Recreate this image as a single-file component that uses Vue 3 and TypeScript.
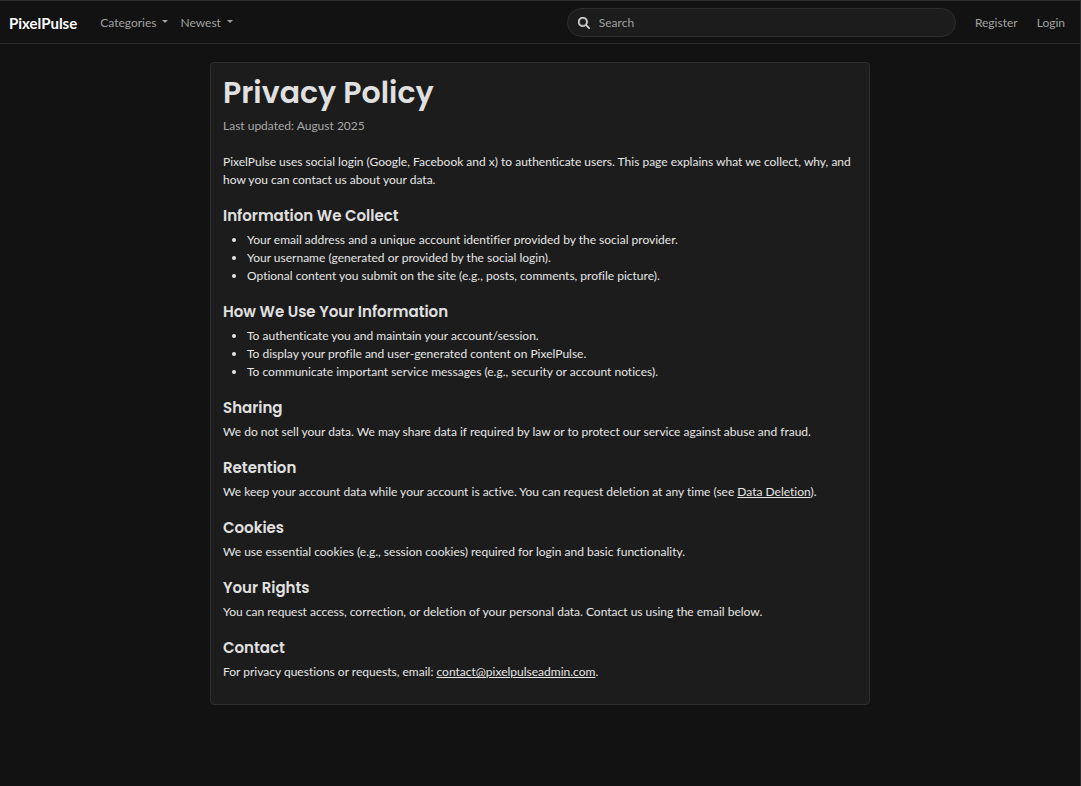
<script setup lang="ts">
import { ref } from 'vue'

interface Section {
  title: string
  items?: string[]
  text?: string
  link?: { label: string; href: string }
  after?: string
}

const query = ref('')

const sections: Section[] = [
  {
    title: 'Information We Collect',
    items: [
      'Your email address and a unique account identifier provided by the social provider.',
      'Your username (generated or provided by the social login).',
      'Optional content you submit on the site (e.g., posts, comments, profile picture).',
    ],
  },
  {
    title: 'How We Use Your Information',
    items: [
      'To authenticate you and maintain your account/session.',
      'To display your profile and user-generated content on PixelPulse.',
      'To communicate important service messages (e.g., security or account notices).',
    ],
  },
  {
    title: 'Sharing',
    text: 'We do not sell your data. We may share data if required by law or to protect our service against abuse and fraud.',
  },
  {
    title: 'Retention',
    text: 'We keep your account data while your account is active. You can request deletion at any time (see ',
    link: { label: 'Data Deletion', href: '#data-deletion' },
    after: ').',
  },
  {
    title: 'Cookies',
    text: 'We use essential cookies (e.g., session cookies) required for login and basic functionality.',
  },
  {
    title: 'Your Rights',
    text: 'You can request access, correction, or deletion of your personal data. Contact us using the email below.',
  },
  {
    title: 'Contact',
    text: 'For privacy questions or requests, email: ',
    link: { label: 'contact@pixelpulseadmin.com', href: 'mailto:contact@pixelpulseadmin.com' },
    after: '.',
  },
]
</script>

<template>
  <div class="page">
    <header class="navbar">
      <a class="brand" href="#">PixelPulse</a>
      <nav class="menus" aria-label="Browse">
        <button class="menu" type="button" aria-haspopup="true">Categories<span class="caret"></span></button>
        <button class="menu" type="button" aria-haspopup="true">Newest<span class="caret"></span></button>
      </nav>
      <form class="search" role="search" @submit.prevent>
        <svg class="search-icon" viewBox="0 0 512 512" aria-hidden="true">
          <path
            fill="currentColor"
            stroke="currentColor"
            stroke-width="16"
            d="M416 208c0 45.900-14.900 88.300-40 122.700L502.600 457.400c12.500 12.500 12.500 32.800 0 45.300s-32.800 12.500-45.300 0L330.700 376c-34.400 25.200-76.800 40-122.700 40C93.100 416 0 322.900 0 208S93.100 0 208 0S416 93.100 416 208zM208 352a144 144 0 1 0 0-288 144 144 0 1 0 0 288z"
          />
        </svg>
        <input v-model="query" class="search-input" type="search" placeholder="Search" aria-label="Search" />
      </form>
      <nav class="account" aria-label="Account">
        <a href="#register">Register</a>
        <a href="#login">Login</a>
      </nav>
    </header>

    <main class="card">
      <h1>Privacy Policy</h1>
      <p class="updated">Last updated: August 2025</p>
      <p>
        PixelPulse uses social login (Google, Facebook and x) to authenticate users. This page explains what we
        collect, why, and how you can contact us about your data.
      </p>
      <section v-for="section in sections" :key="section.title">
        <h2>{{ section.title }}</h2>
        <ul v-if="section.items">
          <li v-for="item in section.items" :key="item">{{ item }}</li>
        </ul>
        <p v-else>{{ section.text }}<a v-if="section.link" :href="section.link.href">{{ section.link.label }}</a>{{ section.after }}</p>
      </section>
    </main>
  </div>
</template>

<style>
body {
  margin: 0;
  background: #121212;
}
</style>

<style scoped>
.page {
  box-sizing: border-box;
  min-height: 100vh;
  padding-bottom: 24px;
  border-top: 1px solid #2d2d2d;
  border-right: 1px solid #2d2d2d;
  background: #121212;
  color: #e6e6e6;
  font: 12px/18px Lato, "Liberation Sans", sans-serif;
  font-variant-ligatures: no-common-ligatures;
}

.navbar {
  display: flex;
  align-items: center;
  box-sizing: border-box;
  height: 43px;
  padding: 1px 15px 0 9px;
  border-bottom: 1px solid #2d2d2d;
}

.brand {
  color: #ffffff;
  font-size: 15px;
  font-weight: 700;
  text-decoration: none;
}

.menus {
  display: flex;
  gap: 12px;
  margin-left: 23px;
}

.menu {
  display: flex;
  align-items: center;
  gap: 6px;
  padding: 0;
  border: 0;
  background: none;
  color: #a0a0a0;
  font: inherit;
}

.caret {
  margin-bottom: 2px;
  border-top: 3px solid currentColor;
  border-right: 3px solid transparent;
  border-left: 3px solid transparent;
}

.search {
  display: flex;
  align-items: center;
  gap: 9px;
  box-sizing: border-box;
  width: 36vw;
  height: 29px;
  margin-left: auto;
  padding: 0 12px 0 10px;
  border: 1px solid #2d2d2d;
  border-radius: 15px;
  background: #1c1c1c;
}

.search-icon {
  flex: none;
  width: 12px;
  height: 12px;
  color: #d8d8d8;
}

.search-input {
  flex: 1;
  min-width: 0;
  padding: 1px 0 0;
  border: 0;
  outline: 0;
  background: none;
  color: #e0e0e0;
  font: inherit;
}

.search-input::placeholder {
  color: #a0a0a0;
  opacity: 1;
}

.account {
  display: flex;
  gap: 19px;
  margin-left: 19px;
}

.account a {
  color: #a0a0a0;
  text-decoration: none;
}

.card {
  box-sizing: border-box;
  max-width: 660px;
  margin: 18px auto 0;
  padding: 12px 12px 23px;
  border: 1px solid #2d2d2d;
  border-radius: 4px;
  background: #1c1c1c;
}

h1,
h2 {
  margin: 0;
  color: #e0e0e0;
  font-family: Poppins, Inter, "Liberation Sans", sans-serif;
  font-weight: 600;
}

h1 {
  margin-bottom: 6px;
  font-size: 30px;
  line-height: 36px;
}

h2 {
  margin: 18px 0 6px;
  font-size: 15px;
  line-height: 18px;
}

p {
  margin: 0;
}

.updated {
  margin-bottom: 18px;
  color: #a8a8a8;
}

ul {
  margin: 0;
  padding-left: 24px;
}

.card a {
  color: inherit;
}
</style>
